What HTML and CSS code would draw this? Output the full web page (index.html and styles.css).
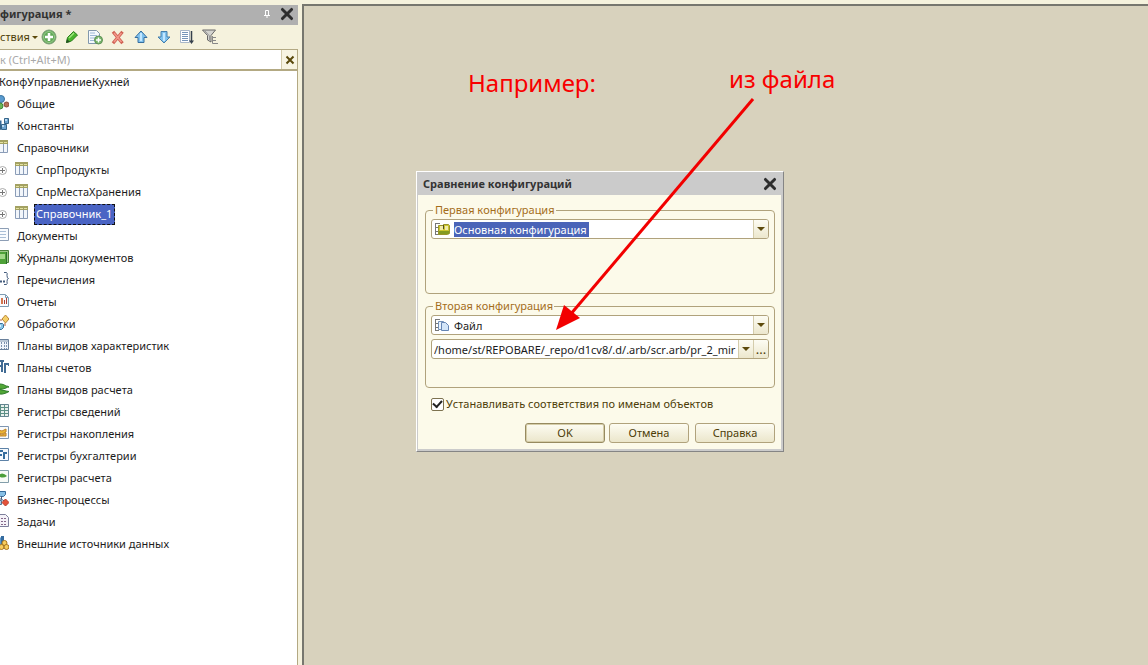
FILE: index.html
```html
<!DOCTYPE html>
<html lang="ru">
<head>
<meta charset="utf-8">
<title>Сравнение конфигураций</title>
<link rel="stylesheet" href="styles.css">
</head>
<body>
<svg class="sprite" aria-hidden="true">
  <symbol id="table" viewBox="0 0 16 16"><path d="M2.500 1.500h12v12h-12z" fill="#f2f6fb" stroke="#8b9db8"/><path d="M6.500 2v11M10.500 2v11" stroke="#8b9db8"/><path d="M2 1h13v4H2z" fill="#a3a162"/><path d="M3 3h3v1H3zM7 3h3v1H7zM11 3h3v1h-3z" fill="#e3e2a0"/></symbol>
  <symbol id="plus" viewBox="0 0 10 10"><circle cx="5.500" cy="5.500" r="4" fill="#fff" stroke="#aaa"/><path d="M3 5.500h5M5.500 3v5" stroke="#777"/></symbol>
  <symbol id="cross" viewBox="0 0 14 14"><path d="M3 3l8 8M11 3l-8 8" stroke="#2e2e2e" stroke-width="2.600" stroke-linecap="round"/></symbol>
  <symbol id="down" viewBox="0 0 8 4"><path d="M0 0h8L4 4z" fill="#5d4a0c"/></symbol>
</svg>

<div class="app">
  <aside class="panel">
    <header class="panel-title">
      <h1>фигурация *</h1>
      <button class="bare" aria-label="Закрепить"><svg width="8" height="10" viewBox="0 0 8 10"><path d="M2.500 1.500h3v5h-3zM1 6.500h6M4 7v2" fill="none" stroke="#fff"/></svg></button>
      <button class="bare" aria-label="Закрыть панель"><svg width="16" height="16"><use href="#cross"/></svg></button>
    </header>
    <div class="toolbar">
      <button class="bare menu">ствия<svg width="6" height="3"><use href="#down"/></svg></button>
      <button class="bare" aria-label="Добавить"><svg width="16" height="16" viewBox="0 0 16 16"><circle cx="8" cy="8" r="7" fill="#62a957" stroke="#7d9d78"/><circle cx="8" cy="8" r="5.500" fill="none" stroke="#9acb8d"/><path d="M8 4v8M4 8h8" stroke="#fff" stroke-width="2.500"/></svg></button>
      <button class="bare" aria-label="Изменить"><svg width="16" height="16" viewBox="0 0 16 16"><path d="M2.500 13.500l1-5 6-6 4 3.500-6 6z" fill="#49b52c" stroke="#2c7d1e"/><path d="M5 9l5-5" stroke="#a1e47f" stroke-width="1.500"/><path d="M2 14l1-4 3 3z" fill="#245420"/></svg></button>
      <button class="bare" aria-label="Добавить копированием"><svg width="16" height="16" viewBox="0 0 16 16"><path d="M1.500 1.500h8l3 3v10h-11z" fill="#f5f9fd" stroke="#8298ad"/><path d="M3 4h5M3 6.500h7M3 9h5M3 11.500h4" stroke="#9db9d5"/><circle cx="11.500" cy="11" r="4" fill="#76b66a" stroke="#609058"/><path d="M11.500 8.500v5M9 11h5" stroke="#fff" stroke-width="1.500"/></svg></button>
      <button class="bare" aria-label="Удалить"><svg width="16" height="16" viewBox="0 0 16 16"><path d="M4 4l7.500 9M11.500 4L4 13" stroke="#cf6254" stroke-width="3.200" stroke-linecap="square"/><path d="M4 4l7.500 9M11.500 4L4 13" stroke="#f2978a" stroke-width="1.500"/></svg></button>
      <button class="bare" aria-label="Вверх"><svg width="16" height="16" viewBox="0 0 16 16"><path d="M8 2l6 6.500h-3v5H5v-5H2z" fill="#80c2ee" stroke="#376f9f"/><path d="M8 4v8" stroke="#c3e7ff" stroke-width="2"/></svg></button>
      <button class="bare" aria-label="Вниз"><svg width="16" height="16" viewBox="0 0 16 16"><path d="M8 14L2 8h3V2.500h6V8h3z" fill="#80c2ee" stroke="#457fac"/><path d="M8 4v8" stroke="#c3e7ff" stroke-width="2"/></svg></button>
      <button class="bare" aria-label="Упорядочить"><svg width="16" height="16" viewBox="0 0 16 16"><path d="M1.500 1.500h9v12h-9z" fill="#fff" stroke="#a9b7c8"/><path d="M3 3.500h6M3 5.500h6M3 7.500h6M3 9.500h6M3 11.500h6" stroke="#7795b9"/><path d="M12.500 2v11" stroke="#35404c" stroke-width="1.500"/><path d="M10 11.500h5L12.500 15z" fill="#35404c"/></svg></button>
      <button class="bare" aria-label="Отбор"><svg width="16" height="16" viewBox="0 0 16 16"><path d="M.5 1h13L9 6.500V13l-3.500-2V6.500z" fill="#d4d4d0" stroke="#686868"/><path d="M3 2l4.500 5v4" fill="none" stroke="#999"/><path d="M10.500 7v7.500M10.500 8.500H14M10.500 11.500H14M10.500 14.500H16" stroke="#888"/></svg></button>
    </div>
    <div class="search">
      <input type="text" placeholder="к (Ctrl+Alt+M)" aria-label="Поиск">
      <button aria-label="Очистить"><svg width="10" height="10" viewBox="0 0 10 10"><path d="M1.500 1.500l7 7M8.500 1.500l-7 7" stroke="#59480b" stroke-width="2"/></svg></button>
    </div>
    <ul class="tree">
      <li class="root">КонфУправлениеКухней</li>
      <li><svg viewBox="0 0 16 16"><circle cx="8" cy="4" r="3.500" fill="#599bd0" stroke="#3b739e"/><circle cx="7" cy="11" r="3" fill="#6ab556" stroke="#3c8939"/><circle cx="13.500" cy="9.500" r="2.500" fill="#b77157" stroke="#8a4d3a"/></svg>Общие</li>
      <li><svg viewBox="0 0 16 16"><path d="M4.500 3.500h4v5h-4z" fill="#386b9b"/><path d="M11.500 1.500h4v5h-4zM8.500 7.500h5v5h-5zM2.500 7.500h5v5h-5z" fill="#6fa4d0" stroke="#356489"/><path d="M12 2h2v2h-2zM9 8h2v2H9z" fill="#b9d9f3"/></svg>Константы</li>
      <li><svg><use href="#table"/></svg>Справочники</li>
      <li class="sub"><svg class="exp"><use href="#plus"/></svg><svg><use href="#table"/></svg>СпрПродукты</li>
      <li class="sub"><svg class="exp"><use href="#plus"/></svg><svg><use href="#table"/></svg>СпрМестаХранения</li>
      <li class="sub"><svg class="exp"><use href="#plus"/></svg><svg><use href="#table"/></svg><span class="current">Справочник_1</span></li>
      <li><svg viewBox="0 0 16 16"><path d="M3.500 1.500h12v12h-12z" fill="#f8fbfe" stroke="#8d9eb5"/><path d="M5 4.500h8M5 7.500h8M5 10.500h8" stroke="#a9bed6"/></svg>Документы</li>
      <li><svg viewBox="0 0 16 16"><path d="M4.500 1.500h11v12h-11z" fill="#9dc987" stroke="#4a813a"/><path d="M2 3h12v12H2z" fill="#4ea138"/><path d="M4 5h8v5H4z" fill="#a2d888"/><path d="M13.500 3v12" stroke="#2b702a"/></svg>Журналы документов</li>
      <li><svg viewBox="0 0 16 16"><path d="M3 1.500q-2 0-1.500 3t-1 3q1.500 0 1 3t1.500 3M11 1.500h2.500q1 0 .5 3 0 3 1.500 3-1.500 0-1.500 3 .500 3-.500 3H11" fill="none" stroke="#435b7c"/><path d="M4 10.500h2M7 10.500h2M10 10.500h2" stroke="#435b7c" stroke-width="2"/></svg>Перечисления</li>
      <li><svg viewBox="0 0 16 16"><path d="M3.500 1.500h9l3 3v9h-12z" fill="#f8fbfe" stroke="#7e9cb3"/><path d="M5 11V6h2v5zM8 11V5h2v6z" fill="#d6774e"/><path d="M11 11V7h1v4zM13 11V5h1v6z" fill="#a74138"/><path d="M12.500 2v2.500H15" fill="none" stroke="#7e9cb3"/></svg>Отчеты</li>
      <li><svg viewBox="0 0 16 16"><path d="M12.500 0L16 4l-3.500 4L9 4z" fill="#f5d06a" stroke="#bb8735"/><path d="M6 5h3M12 8v3" stroke="#b16042"/><path d="M2.500 8.500h7l1 1v3l-2 2h-6z" fill="#88c4e6" stroke="#366e98"/><path d="M4 10h4v2H4z" fill="#d3efff"/></svg>Обработки</li>
      <li><svg viewBox="0 0 16 16"><path d="M1.500 2.500h14v10h-14z" fill="#f0f5fb" stroke="#69809b"/><path d="M2 4h13" stroke="#8197ae"/><path d="M5.500 5v7M8.500 5v7M11.500 5v7M13.500 5v7" stroke="#7c91ad" stroke-dasharray="2 1"/></svg>Планы видов характеристик</li>
      <li><svg viewBox="0 0 16 16"><path d="M3 1h8v2H5v3h4v2H5v5H3zM8 3h2v10H8zM11 4h5v3h-1V6h-2v8h-2z" fill="#416b94"/></svg>Планы счетов</li>
      <li><svg viewBox="0 0 16 16"><path d="M1 5q7-4 12 0 2 0 3 1-2 0-3 1-7 3-12-2zM1 10q6-3 12 0l3 .5-3 1.500q-7 3-12-2z" fill="#51a636" stroke="#2e7b2b"/></svg>Планы видов расчета</li>
      <li><svg viewBox="0 0 16 16"><path d="M3.500 1.500h12v12h-12z" fill="#e8f0ee" stroke="#648591"/><path d="M4 4.500h11M4 7.500h11M4 10.500h11M7.500 2v11M11.500 2v11" stroke="#5d8f86"/></svg>Регистры сведений</li>
      <li><svg viewBox="0 0 16 16"><path d="M3.500 1.500h12v12h-12z" fill="#fbfbfa" stroke="#7e96b2"/><path d="M5 5l4 1 4-2v3l-4 2-4-1zM5 9l4 1 4-2v3H5z" fill="#edb634" stroke="#c18428"/></svg>Регистры накопления</li>
      <li><svg viewBox="0 0 16 16"><path d="M3.500 1.500h12v12h-12z" fill="#f4f9fd" stroke="#5d82a7"/><path d="M5 3h5v2H7v2h2v2H7v3H5zM10 5h4v2h-2v5h-2z" fill="#356d9e"/></svg>Регистры бухгалтерии</li>
      <li><svg viewBox="0 0 16 16"><path d="M3.500 1.500h12v12h-12z" fill="#f8fbf7" stroke="#839eaa"/><path d="M5 7q4-5 9 0-4 3-9 0z" fill="#4b9f3a"/></svg>Регистры расчета</li>
      <li><svg viewBox="0 0 16 16"><path d="M5.500.5h7v3l-2 2h-3l-2-2z" fill="#88bfe4" stroke="#366b9a"/><path d="M8.500 5v3h-3M8 8l5 3" fill="none" stroke="#465f7f"/><path d="M3.500 9.500h5v4h-5z" fill="#a8ceeb" stroke="#4f7898"/><path d="M12.500 8l3.500 3.500-3.500 3.500L9 11.500z" fill="#e5523a" stroke="#b73c2b"/></svg>Бизнес-процессы</li>
      <li><svg viewBox="0 0 16 16"><path d="M3.500 1.500h9l3 3v9h-12z" fill="#f4f2f8" stroke="#7d7f9c"/><path d="M5 5.500h2M8 5.500h2M11 5.500h2M5 8.500h2M8 8.500h2M11 8.500h2M5 11.500h2M8 11.500h2M11 11.500h2" stroke="#84678b"/></svg>Задачи</li>
      <li><svg viewBox="0 0 16 16"><path d="M4 1l5 2v9l-5-1z" fill="#5b98cd"/><path d="M8 1h3v8H8z" fill="#356b9e"/><circle cx="11.500" cy="8" r="2.500" fill="#f7cd5e" stroke="#a8741d"/><circle cx="8.500" cy="12" r="2.500" fill="#f7cd5e" stroke="#a8741d"/><circle cx="13.500" cy="12" r="2.500" fill="#f7cd5e" stroke="#a8741d"/></svg>Внешние источники данных</li>
    </ul>
  </aside>

  <main class="desktop">
    <section class="dialog" role="dialog" aria-labelledby="dlg-title">
      <header class="dialog-title">
        <h2 id="dlg-title">Сравнение конфигураций</h2>
        <button class="bare" aria-label="Закрыть"><svg width="16" height="16"><use href="#cross"/></svg></button>
      </header>
      <form class="dialog-body">
        <fieldset>
          <legend>Первая конфигурация</legend>
          <div class="combo">
            <svg class="kind" viewBox="0 0 18 16"><path d="M2.500 2v12M3 2.500h4M3 6.500h3M3 10.500h3M3 13.500h3" fill="none" stroke="#777"/><path d="M5.500 4.500h5v-1h5l1 1v8l-2 1h-9z" fill="#cbc52e" stroke="#99952a"/><path d="M7 5h3v4H7zM12 5h3v4h-3z" fill="#f2ecab"/><path d="M6 10h10v3H6z" fill="#849a20"/><path d="M10 4h1v4h-1z" fill="#504c26"/></svg>
            <select class="marked" aria-label="Первая конфигурация"><option>Основная конфигурация</option></select>
            <span class="drop"><svg width="8" height="4"><use href="#down"/></svg></span>
          </div>
        </fieldset>
        <fieldset>
          <legend>Вторая конфигурация</legend>
          <div class="combo">
            <svg class="kind" viewBox="0 0 18 16"><path d="M2.500 2v12M3 2.500h4M3 6.500h3M3 10.500h3M3 13.500h3" fill="none" stroke="#777"/><path d="M5.500 4.500h5v8h-5z" fill="#e9f2fb" stroke="#7491b8"/><path d="M8.500 5.500h4l3 3v5h-7z" fill="#d3e5f8" stroke="#6585b4"/></svg>
            <select aria-label="Вторая конфигурация"><option>Файл</option></select>
            <span class="drop"><svg width="8" height="4"><use href="#down"/></svg></span>
          </div>
          <div class="combo">
            <input class="path" type="text" aria-label="Путь к файлу" value="/home/st/REPOBARE/_repo/d1cv8/.d/.arb/scr.arb/pr_2_mir">
            <button type="button" class="drop" aria-label="Последние файлы"><svg width="8" height="4"><use href="#down"/></svg></button>
            <button type="button" class="drop more">...</button>
          </div>
        </fieldset>
        <label class="check"><input type="checkbox" checked>Устанавливать соответствия по именам объектов</label>
        <div class="actions">
          <button type="button" class="push default">OK</button>
          <button type="button" class="push">Отмена</button>
          <button type="button" class="push help">Справка</button>
        </div>
      </form>
    </section>
    <p class="note note-example">Например:</p>
    <p class="note note-file">из файла</p>
    <svg class="arrow" viewBox="0 0 200 234" aria-hidden="true"><path d="M197 1L14 217" stroke="#f20000" stroke-width="3"/><path d="M0 232L8 207l16 13z" fill="#f20000"/></svg>
  </main>
</div>
</body>
</html>
```
FILE: styles.css
```css
* { box-sizing: border-box; }
body {
  margin: 0;
  background: #f5f2dd;
  color: #1c1c1c;
  font: 11px/16px "Noto Sans", sans-serif;
  font-kerning: none;
}
h1, h2, p, ul { margin: 0; padding: 0; }
h1, h2 { flex: 1; font-size: 11px; font-weight: 700; color: #333; }
button, input, select { font: inherit; font-kerning: none; color: inherit; margin: 0; padding: 0; }
.sprite { display: none; }
svg { display: block; flex: none; }
.bare { display: flex; align-items: center; border: 0; background: none; }

.app { display: flex; height: 100vh; overflow: hidden; padding-top: 4px; }

.panel { display: flex; flex-direction: column; width: 298px; margin-right: 4px; flex: none; overflow: hidden; padding-top: 1px; }
.panel-title { display: flex; align-items: center; gap: 8px; height: 20px; padding: 0 3px 2px 0; background: #b0b0b0; }
.toolbar { display: flex; align-items: center; gap: 7px; height: 24px; color: #4d3d08; }
.menu { gap: 2px; margin-right: -4px; }
.search { display: flex; height: 22px; border: 1px solid #b3a983; border-left: 0; border-bottom-width: 2px; background: #fff; }
.search input { flex: 1; min-width: 0; border: 0; outline: 0; background: none; }
.search input::placeholder { color: #a9a9a9; }
.search button { display: flex; align-items: center; justify-content: center; width: 16px; border: 0; border-left: 1px solid #d4ccab; background: #f7f4e2; }
.tree { flex: 1; list-style: none; background: #fff; border-right: 1px solid #b3a983; }
.tree li { display: flex; align-items: center; gap: 8px; height: 22px; margin-left: -7px; white-space: nowrap; }
.tree li svg { width: 16px; height: 16px; margin-bottom: 2px; }
.tree .root { padding-left: 6px; }
.tree .sub { padding-left: 4px; gap: 6px; }
.tree .sub .exp { width: 10px; height: 10px; margin-bottom: 0; }
.tree .sub svg + svg { margin-right: 1px; }
.current { margin-left: -2px; padding: 1px 2px 2px 1px; border: 1px dashed #111; background: #4a64c4; color: #fff; }

.desktop { position: relative; flex: 1; min-width: 0; background: #d8d2bd; border-top: 2px solid #77776f; border-left: 2px solid #77776f; }

.dialog {
  position: absolute; left: 112px; top: 165px; width: 368px;
  border: 1px solid; border-color: #fff #858585 #858585 #fff;
  background: #cbcbcb; padding: 1px 2px 2px 1px;
}
.dialog-title { display: flex; align-items: center; height: 22px; padding: 0 3px 0 5px; background: #cbcbcb; }
.dialog-body { display: flex; flex-direction: column; padding: 7px 6px 6px 7px; background: #fcfaea; color: #4d3d08; }
fieldset { display: flex; flex-direction: column; gap: 4px; min-width: 0; min-height: 92px; margin: 0 0 4px; padding: 1px 5px; border: 1px solid #b0a27c; border-radius: 4px; }
fieldset + fieldset { min-height: 90px; margin-bottom: 8px; }
legend { padding: 0 1px 0 2px; margin-left: 2px; color: #a46d1b; }
.combo { display: flex; height: 20px; border: 1px solid #b0a27c; border-radius: 3px; background: #fff; color: #1c1c1c; overflow: hidden; }
.kind { width: 18px; height: 16px; margin: 1px 0 0 1px; }
.combo select { flex: 1; min-width: 0; height: 18px; padding: 1px 0 0 3px; border: 0; outline: 0; appearance: none; background: none; line-height: 18px; }
.combo .marked { color: #fff; background: linear-gradient(#4a64b8, #4a64b8) no-repeat 3px 2px / 135px 15px; }
.path { flex: 1; min-width: 0; padding: 2px 0 0 2px; border: 0; outline: 0; background: none; }
.drop { display: flex; align-items: center; justify-content: center; width: 15px; border: 0; border-left: 1px solid #d4ccab; background: linear-gradient(#fdfcf3, #ece7cd); color: #4d3d08; }
.more { font-size: 13px; }
.check { display: flex; align-items: center; gap: 2px; padding-left: 6px; height: 16px; }
.check input { appearance: none; width: 13px; height: 13px; border: 1px solid #7d7250; border-radius: 2px; background: #fff; display: grid; place-items: center; }
.check input:checked::before { content: ""; width: 7px; height: 4px; border: solid #222; border-width: 0 0 2px 2px; transform: rotate(-48deg); margin-bottom: 2px; }
.actions { display: flex; justify-content: flex-end; gap: 4px; margin-top: 11px; }
.push { width: 80px; height: 20px; border: 1px solid #b0a27c; border-radius: 3px; background: linear-gradient(#fdfcf2, #ebe6cb); }
.default { border-color: #978a60; box-shadow: inset 0 0 0 1px #d5cda8; }
.help { margin-left: 2px; }

.note { position: absolute; color: #f80000; font-size: 24px; line-height: 32px; white-space: nowrap; }
.note-example { left: 164px; top: 61px; }
.note-file { left: 425px; top: 57px; }
.arrow { position: absolute; left: 252px; top: 92px; width: 200px; height: 234px; pointer-events: none; }
```
